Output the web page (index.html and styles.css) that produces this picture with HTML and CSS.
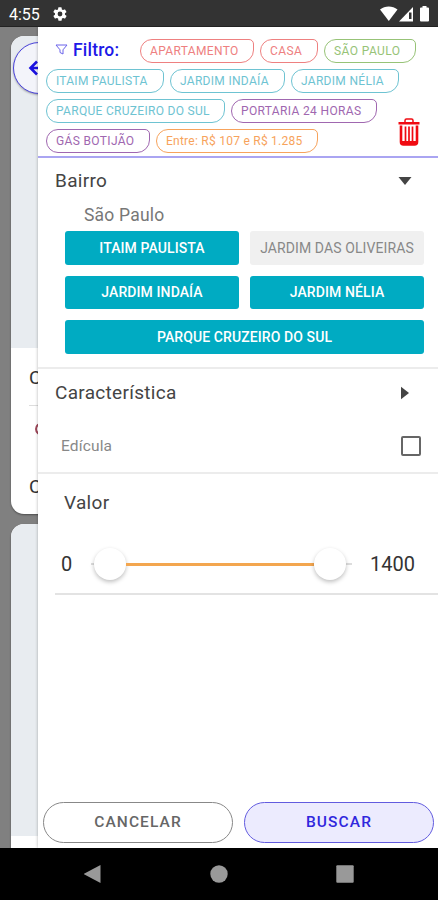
FILE: index.html
```html
<!DOCTYPE html>
<html lang="pt-BR">
<head>
    <meta charset="UTF-8">
    <meta name="viewport" content="width=device-width, initial-scale=1.0">
    <title>Filtro</title>
    <link rel="stylesheet" href="styles.css">
</head>
<body>

<!-- Barra de status -->
    <header class="status">
        <span class="hora">4:55</span>
        <svg class="engrenagem" width="16" height="16" viewBox="0 0 24 24"><path fill="#fff" fill-rule="evenodd" d="M19.4 13a7.5 7.5 0 0 0 0-2l2.100-1.600a.5.5 0 0 0 .1-.7l-2-3.400a.5.5 0 0 0-.6-.2l-2.500 1a7.300 7.300 0 0 0-1.700-1l-.4-2.600a.5.5 0 0 0-.5-.5h-4a.5.5 0 0 0-.5.5L9 5.100a7.700 7.700 0 0 0-1.700 1l-2.500-1a.5.5 0 0 0-.6.2l-2 3.400a.5.5 0 0 0 .1.700L4.500 11a7.900 7.900 0 0 0 0 2l-2.100 1.600a.5.5 0 0 0-.1.700l2 3.400c.1.200.4.300.6.200l2.500-1a7.300 7.300 0 0 0 1.700 1l.4 2.600c0 .3.200.5.5.5h4c.3 0 .5-.2.500-.5l.4-2.600a7.700 7.700 0 0 0 1.700-1l2.500 1c.2.100.5 0 .6-.2l2-3.400a.5.5 0 0 0-.1-.700zM12 15.600a3.600 3.600 0 1 1 0-7.200 3.600 3.600 0 0 1 0 7.200z"/></svg>
        <svg class="sinais" width="52" height="18" viewBox="0 0 52 18">
            <path fill="#fff" d="M0 4.500C5 .5 12.500.5 17.500 4.500L8.800 16z"/>
            <path fill="#fff" d="M33 2v14.500H19z"/>
            <path fill="#333" d="M29 7.500h2.500v6.500H29z"/>
            <path fill="#fff" d="M42.500 2.500V1h4v1.500h1.500a1 1 0 0 1 1 1V15.500a1 1 0 0 1-1 1h-7a1 1 0 0 1-1-1V3.500a1 1 0 0 1 1-1z"/>
        </svg>
    </header>

    <main class="tela">

<!-- Lista atrás do painel -->
        <div class="fundo">
            <div class="cartao">
                <div class="foto foto-topo">
                    <div class="voltar">
                        <svg width="20" height="20" viewBox="0 0 20 20"><path d="M11 3.500L4.500 10l6.500 6.500M4.500 10H18" fill="none" stroke="#1b12e0" stroke-width="2.600"/></svg>
                    </div>
                </div>
                <div class="dados">
                    <p class="linha titulo">C</p>
                    <p class="linha icone">
                        <svg width="16" height="18" viewBox="0 0 16 18"><ellipse cx="8" cy="8" rx="6" ry="5.500" fill="none" stroke="#a0475a" stroke-width="2"/></svg>
                    </p>
                    <p class="linha">C</p>
                </div>
            </div>
            <div class="cartao segundo">
                <div class="foto"></div>
            </div>
        </div>

<!-- Painel de filtro -->
        <section class="painel">
            <div class="filtros">
                <div class="fila primeira">
                    <svg class="funil" width="13" height="12" viewBox="0 0 13 12"><path d="M1 1h11L8 5.800V10L5 8.500V5.800z" fill="none" stroke="#6a63ea" stroke-width="1"/></svg>
                    <h1>Filtro:</h1>
                    <span class="chip vermelho apto">APARTAMENTO</span>
                    <span class="chip vermelho casa">CASA</span>
                    <span class="chip verde cidade">SÃO PAULO</span>
                </div>
                <div class="fila">
                    <span class="chip azul itaim">ITAIM PAULISTA</span>
                    <span class="chip azul indaia">JARDIM INDAÍA</span>
                    <span class="chip azul nelia">JARDIM NÉLIA</span>
                </div>
                <div class="fila">
                    <span class="chip azul parque">PARQUE CRUZEIRO DO SUL</span>
                    <span class="chip roxo portaria">PORTARIA 24 HORAS</span>
                </div>
                <div class="fila">
                    <span class="chip roxo gas">GÁS BOTIJÃO</span>
                    <span class="chip laranja entre">Entre: R$ 107 e R$ 1.285</span>
                </div>
                <svg class="lixeira" width="22" height="28" viewBox="0 0 22 28">
                    <path d="M7 4V2.500Q7 1 8.500 1h5Q15 1 15 2.500V4" fill="none" stroke="#f00b12" stroke-width="1.500"/>
                    <path d="M.5 4h21v2.500H.5z" fill="#f00b12"/>
                    <path d="M3 7.500V24a2.500 2.500 0 0 0 2.500 2.500h11A2.500 2.500 0 0 0 19 24V7.500" fill="none" stroke="#f00b12" stroke-width="2.600"/>
                    <path d="M7.500 8.500v14.500M11 8.500v14.500M14.500 8.500v14.500" stroke="#f00b12" stroke-width="1.700"/>
                    <path d="M3 23h16v3H3z" fill="#f00b12"/>
                </svg>
            </div>

            <div class="bairro">
                <div class="cabeca">
                    <h2>Bairro</h2>
                    <svg class="seta" width="14" height="14" viewBox="0 0 14 14"><path d="M.5 3h13L7 11z" fill="#444"/></svg>
                </div>
                <h3>São Paulo</h3>
                <div class="grade">
                    <button class="ativo">ITAIM PAULISTA</button>
                    <button class="inativo">JARDIM DAS OLIVEIRAS</button>
                    <button class="ativo">JARDIM INDAÍA</button>
                    <button class="ativo">JARDIM NÉLIA</button>
                    <button class="ativo largo">PARQUE CRUZEIRO DO SUL</button>
                </div>
            </div>

            <div class="caracteristica">
                <div class="cabeca">
                    <h2>Característica</h2>
                    <svg class="seta" width="14" height="14" viewBox="0 0 14 14"><path d="M3 .8v12.400L11 7z" fill="#444"/></svg>
                </div>
                <div class="opcao">
                    <span>Edícula</span>
                    <i class="caixa"></i>
                </div>
            </div>

            <div class="valor">
                <h2 class="t-valor">Valor</h2>
                <div class="faixa">
                    <span class="minimo">0</span>
                    <div class="trilho">
                        <i class="bola"></i>
                        <i class="barra"></i>
                        <i class="bola"></i>
                    </div>
                    <span class="maximo">1400</span>
                </div>
            </div>

            <div class="acoes">
                <button class="cancelar">CANCELAR</button>
                <button class="buscar">BUSCAR</button>
            </div>
        </section>
    </main>

<!-- Navegação do sistema -->
    <footer class="navegacao">
        <svg width="18" height="20" viewBox="0 0 18 20"><path d="M16.500 1v18L-.5 10z" fill="#999"/></svg>
        <svg width="18" height="20" viewBox="0 0 18 20"><circle cx="9" cy="10" r="8.700" fill="#999"/></svg>
        <svg width="18" height="20" viewBox="0 0 18 20"><rect x=".3" y="1.200" width="17.400" height="17.600" rx="1" fill="#999"/></svg>
    </footer>

</body>
</html>
```
FILE: styles.css
```css
/* Estilos gerais */
    * {
        box-sizing: border-box;
    }

    body {
        margin: 0;
        height: 900px;
        display: flex;
        flex-direction: column;
        overflow: hidden;
        font-family: Roboto, sans-serif;
        background: #fff;
        color: #444;
    }

    h1, h2, h3, p {
        margin: 0;
        font-weight: 400;
    }

    svg {
        display: block;
        flex: none;
    }

    button {
        font-family: inherit;
        padding: 0;
    }

/* Barra de status */
    .status {
        height: 27px;
        flex: none;
        display: flex;
        align-items: center;
        padding: 2px 6px 0 9px;
        background: #333;
        border-bottom: 1px solid #222;
    }

    .hora {
        width: 43px;
        font-size: 16px;
        color: #fff;
    }

    .sinais {
        margin-left: auto;
    }

    .tela {
        height: 821px;
        flex: none;
        display: flex;
    }

/* Lista atrás do painel */
    .fundo {
        width: 38px;
        flex: none;
        overflow: hidden;
        padding: 9px 0 0 11px;
        background: #808080;
    }

    .cartao {
        width: 300px;
        height: 478px;
        border-radius: 13px;
        background: #fff;
        box-shadow: 0 1px 2px rgba(0, 0, 0, 0.4);
    }

    .segundo {
        margin-top: 10px;
    }

    .foto {
        height: 312px;
        border-radius: 13px 13px 0 0;
        background: #e8ecf0;
    }

    .foto-topo {
        padding: 6px 0 0 2px;
    }

    .voltar {
        width: 52px;
        height: 52px;
        padding: 15px 0 0 12px;
        border: 1px solid #4a43dc;
        border-radius: 50%;
        background: #f3f4fa;
        box-shadow: 0 1px 2px rgba(0, 0, 0, 0.3);
    }

    .dados {
        padding-left: 18px;
    }

    .linha {
        height: 54px;
        padding-top: 19px;
        font-size: 19px;
        line-height: 22px;
        color: #333;
    }

    .titulo {
        height: 58px;
        border-bottom: 1px solid #ddd;
    }

    .icone {
        height: 51px;
        padding: 15px 0 0 5px;
    }

/* Painel */
    .painel {
        flex: 1;
        display: flex;
        flex-direction: column;
        background: #fff;
        box-shadow: 0 0 3px rgba(0, 0, 0, 0.3);
        clip-path: inset(0 0 0 -3px);
    }

    .filtros {
        position: relative;
        height: 131px;
        display: flex;
        flex-direction: column;
        gap: 6px;
        padding: 12px 0 0 8px;
        border-bottom: 2px solid #aaa5f2;
    }

    .fila {
        height: 24px;
        display: flex;
        gap: 6px;
    }

    .primeira {
        padding-left: 9px;
    }

    .funil {
        margin: 5px -1px 0 0;
    }

    h1 {
        width: 61px;
        font-size: 17.500px;
        font-weight: 500;
        line-height: 22px;
        letter-spacing: 0.2px;
        color: #2018e8;
    }

    .chip {
        flex: none;
        height: 24px;
        padding-left: 9px;
        border: 1px solid;
        border-radius: 12px 5px 13px 12px;
        font-size: 12px;
        line-height: 23px;
        white-space: nowrap;
    }

    .vermelho { color: #ee8080; }
    .verde { color: #97c377; }
    .azul { color: #6ec3d2; }
    .roxo { color: #a067b0; }
    .laranja { color: #f7a35c; }

    .apto { width: 114px; letter-spacing: 0.35px; }
    .casa { width: 58px; letter-spacing: 0.4px; }
    .cidade { width: 92px; letter-spacing: 0.4px; }
    .itaim { width: 118px; letter-spacing: 0.25px; }
    .indaia { width: 115px; letter-spacing: 0.3px; }
    .nelia { width: 108px; letter-spacing: 0.3px; }
    .parque { width: 179px; letter-spacing: 0.3px; }
    .portaria { width: 146px; letter-spacing: 0.35px; }
    .gas { width: 104px; letter-spacing: 0.35px; }
    .entre { width: 162px; letter-spacing: 0.25px; }

    .lixeira {
        position: absolute;
        right: 19px;
        bottom: 10px;
    }

/* Bairro */
    h2 {
        font-size: 19px;
        line-height: 24px;
        letter-spacing: 0.3px;
    }

    .cabeca {
        display: flex;
        align-items: center;
        justify-content: space-between;
        padding-right: 27px;
    }

    .bairro {
        height: 211px;
        padding: 11px 0 0 17px;
        border-bottom: 2px solid #ececec;
    }

    h3 {
        padding: 11px 0 5px 29px;
        font-size: 17.500px;
        line-height: 22px;
        letter-spacing: 0.2px;
        color: #777;
    }

    .grade {
        display: grid;
        grid-template-columns: 174px 174px;
        grid-auto-rows: 33.500px;
        gap: 11px;
        padding-left: 10px;
    }

    .grade button {
        border: 0;
        border-radius: 3px;
        font-size: 14px;
        line-height: 20px;
        letter-spacing: 0.1px;
        white-space: nowrap;
    }

    .grade .ativo {
        background: #00abc2;
        color: #fff;
        font-weight: 500;
    }

    .grade .inativo {
        background: #f0f0f0;
        color: #888;
    }

    .largo {
        grid-column: span 2;
    }

/* Característica */
    .caracteristica {
        height: 105px;
        padding: 12px 0 0 17px;
        border-bottom: 2px solid #ececec;
    }

    .opcao {
        display: flex;
        align-items: center;
        justify-content: space-between;
        padding: 31px 18px 0 6px;
        font-size: 15.500px;
        line-height: 20px;
        letter-spacing: 0.15px;
        color: #888;
    }

    .caixa {
        width: 20px;
        height: 20px;
        border: 2px solid #666;
        border-radius: 2px;
    }

/* Valor */
    .valor {
        height: 121px;
        margin-left: 17px;
        padding: 17px 0 0 6px;
        border-bottom: 2px solid #e3e3e3;
    }

    .t-valor {
        padding-left: 3px;
    }

    .faixa {
        display: flex;
        align-items: center;
        height: 34px;
        margin-top: 32px;
        font-size: 20px;
        color: #333;
    }

    .minimo {
        width: 30px;
    }

    .trilho {
        width: 261px;
        display: flex;
        align-items: center;
        padding: 0 6px 0 3px;
        background: linear-gradient(#ddd, #ddd) center / 100% 2px no-repeat;
    }

    .bola {
        width: 32px;
        height: 32px;
        flex: none;
        border-radius: 50%;
        background: #fff;
        box-shadow: 0 2px 4px rgba(0, 0, 0, 0.25);
    }

    .barra {
        flex: 1;
        height: 3px;
        background: #f3a64f;
    }

    .maximo {
        margin-left: 18px;
    }

/* Botões */
    .acoes {
        display: flex;
        gap: 11px;
        margin-top: auto;
        padding: 0 5px 5px;
    }

    .acoes button {
        width: 190px;
        height: 41px;
        padding-bottom: 2px;
        border: 1px solid #888;
        border-radius: 21px;
        background: #fff;
        font-size: 15.500px;
        font-weight: 500;
        letter-spacing: 1.100px;
        color: #666;
    }

    .acoes .buscar {
        border-color: #625bdf;
        background: #ecebfe;
        color: #3027dd;
    }

/* Navegação */
    .navegacao {
        height: 52px;
        flex: none;
        display: flex;
        gap: 108px;
        padding: 16px 0 0 84px;
        background: #000;
    }
```
